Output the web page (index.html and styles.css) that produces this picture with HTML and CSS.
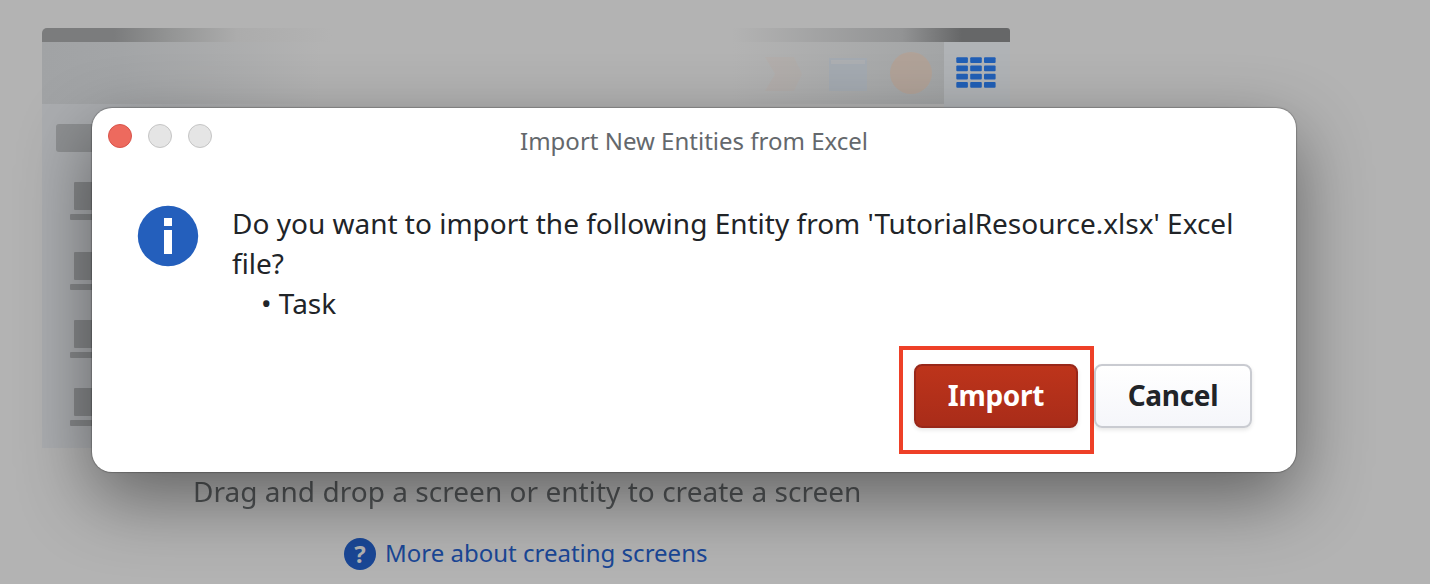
FILE: index.html
```html
<!DOCTYPE html>
<html lang="en">
<head>
<meta charset="utf-8">
<title>Import New Entities from Excel</title>
<link rel="stylesheet" href="styles.css">
</head>
<body>
<main class="workspace">
  <section class="preview" aria-hidden="true">
    <div class="preview-bar"></div>
    <div class="preview-tools">
      <svg class="tool tool-tag" viewBox="0 0 38 34"><path d="M0 0h29l8 17-8 17H0l10-17z"/></svg>
      <svg class="tool tool-window" viewBox="0 0 38 34"><path d="M0 1h38v33H0z"/><path class="window-head" d="M2 3h34v4H2z"/></svg>
      <svg class="tool tool-circle" viewBox="0 0 42 42"><circle cx="21" cy="21" r="21"/></svg>
      <div class="tab-table">
        <svg class="table-icon" viewBox="0 0 40 32">
          <g id="cells"><rect x="0.3" y="0.3" width="11.6" height="5.7" rx="1"/><rect x="14.2" y="0.3" width="11.6" height="5.7" rx="1"/><rect x="28" y="0.3" width="11.6" height="5.7" rx="1"/></g>
          <use href="#cells" y="8.3"/><use href="#cells" y="16.5"/><use href="#cells" y="24.8"/>
        </svg>
      </div>
    </div>
    <div class="preview-side">
      <div class="side-button"></div>
      <div class="side-item"><i class="thumb"></i><i class="caption"></i></div>
      <div class="side-item"><i class="thumb"></i><i class="caption"></i></div>
      <div class="side-item"><i class="thumb"></i><i class="caption"></i></div>
      <div class="side-item"><i class="thumb"></i><i class="caption"></i></div>
    </div>
  </section>
  <p class="hint">Drag and drop a screen or entity to create a screen</p>
  <a class="more"><span class="help-badge">?</span><span class="more-text">More about creating screens</span></a>
</main>

<div class="dialog" role="dialog">
  <header class="titlebar">
    <div class="lights"><i class="light close"></i><i class="light"></i><i class="light"></i></div>
    <h1 class="title">Import New Entities from Excel</h1>
  </header>
  <div class="body">
    <svg class="info" viewBox="0 0 62 62"><circle cx="31" cy="31" r="30.2"/><path d="M27 13h8v8h-8zM27 25h8v24h-8z"/></svg>
    <div class="message">
      <p class="question">Do you want to import the following Entity from 'TutorialResource.xlsx' Excel file?</p>
      <p class="entity">• Task</p>
    </div>
  </div>
  <footer class="actions">
    <div class="highlight"><button class="btn primary">Import</button></div>
    <button class="btn">Cancel</button>
  </footer>
</div>
</body>
</html>
```
FILE: styles.css
```css
* { box-sizing: border-box; }
body {
  margin: 0;
  height: 584px;
  overflow: hidden;
  background: #b3b3b3;
  font-family: "Noto Sans", sans-serif;
  color: #212428;
}
p, h1 { margin: 0; font-weight: 400; }
i { display: block; }

/* Dimmed editor behind the dialog */
.workspace { padding: 28px 0 0 42px; }
.preview { width: 968px; height: 420px; filter: blur(0.6px); }
.preview-bar {
  height: 14px;
  border-radius: 5px 3px 0 0;
  background: linear-gradient(90deg, #7b7c7d 0, #7b7c7d 72px, #949595 130px, #acacac 195px, #b3b3b3 290px, #b3b3b3 690px, #929394 860px, #666768 920px, #666768 100%);
}
.preview-tools {
  display: flex;
  align-items: center;
  height: 62px;
  padding-left: 723px;
  background: linear-gradient(90deg, #a1a3a5 0, #a3a5a7 80px, #b3b3b3 280px, #b3b3b3 690px, #a3a5a6 902px);
}
.tool { width: 38px; height: 34px; margin-right: 26px; margin-top: 2px; }
.tool-tag { fill: #b5aba5; opacity: .4; }
.tool-window { fill: #a2aab4; margin-right: 23px; opacity: .7; }
.window-head { fill: #aeb1b5; }
.tool-circle { width: 42px; height: 42px; fill: #b3a296; margin: 0 12px 0 0; opacity: .85; }
.tab-table {
  align-self: stretch;
  flex: 1;
  height: 66px;
  padding: 15px 12px;
  background: #b0b3b6;
}
.table-icon { display: block; width: 40px; height: 32px; fill: #215fb6; }
.preview-side {
  width: 300px;
  height: 344px;
  padding: 20px 0 0 14px;
  background: linear-gradient(90deg, #abadb0 0, #abadb0 80px, #b3b3b3 280px);
}
.side-button { width: 160px; height: 28px; margin-bottom: 30px; border-radius: 3px; background: #8e9092; }
.side-item { height: 68px; padding-left: 14px; }
.side-item:nth-child(2) { height: 70px; }
.thumb { width: 60px; height: 28px; margin: 0 0 4px 4px; border-radius: 1px; background: #87898b; }
.caption { width: 68px; height: 6px; border-radius: 1px; background: #87898b; }
.hint {
  margin: 23px 0 0 151px;
  font-size: 28px;
  line-height: 40px;
  letter-spacing: 0.03px;
  color: #515456;
  filter: blur(0.6px);
}
.more {
  display: flex;
  align-items: center;
  gap: 9px;
  margin: 24px 0 0 302px;
  font-size: 24px;
  line-height: 36px;
  color: #1a4796;
}
.help-badge {
  width: 32px;
  height: 32px;
  margin-top: 2px;
  border-radius: 50%;
  background: #1a4796;
  color: #b3b3b3;
  font-size: 24px;
  font-weight: 700;
  line-height: 31px;
  text-align: center;
}

/* Dialog window */
.dialog {
  position: absolute;
  left: 92px;
  top: 108px;
  width: 1204px;
  height: 364px;
  border-radius: 20px;
  background: #fff;
  box-shadow: 0 0 1px 1px rgba(0,0,0,.22), 0 26px 72px rgba(0,0,0,.45);
}
.titlebar { display: grid; grid-template-columns: 120px 1fr 120px; height: 97px; }
.lights { display: flex; gap: 16px; padding: 16px 0 0 16px; }
.light { width: 24px; height: 24px; flex: none; border: 1px solid #c5c5c5; border-radius: 50%; background: #e5e5e5; }
.light.close { border-color: #d9534a; background: #ed6a5e; }
.title { padding-top: 15px; font-size: 24px; line-height: 36px; text-align: center; color: #64686c; }
.body { display: flex; gap: 33px; padding-left: 45px; height: 141px; }
.info { width: 62px; height: 62px; flex: none; fill: #245fbc; }
.info path { fill: #fff; }
.message { width: 1024px; font-size: 28px; line-height: 40px; }
.question { margin-top: -2px; }
.entity { padding-left: 29px; }
.actions { display: flex; justify-content: flex-end; padding-right: 44px; }
.highlight { width: 195px; height: 108px; padding: 14px 0 0 11px; border: 4px solid #ee4027; }
.btn {
  width: 158px;
  height: 64px;
  margin-top: 18px;
  padding: 0 0 2px;
  border: 2px solid #c9cbd1;
  border-radius: 8px;
  background: linear-gradient(#fff, #f5f6fa);
  box-shadow: 0 2px 4px rgba(0,0,0,.1);
  font: 700 28px/40px "Noto Sans", sans-serif;
  letter-spacing: -0.3px;
  color: #212428;
}
.btn.primary { width: 164px; margin: 0; border-color: #982719; background: linear-gradient(#bd341b, #a92c19); color: #fff; }
```
